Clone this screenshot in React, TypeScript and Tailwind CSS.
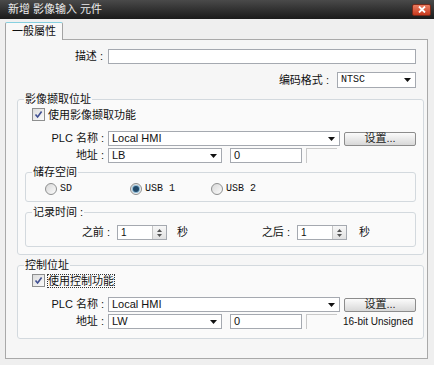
import React from "react";

const font = "font-['Liberation_Sans','Noto_Sans_CJK_SC',sans-serif]";
const mono = "font-['Liberation_Mono','Noto_Sans_CJK_SC',monospace]";

function Arrow() {
  return (
    <svg width="7" height="4" viewBox="0 0 7 4" className="shrink-0">
      <path d="M0 0h7L3.5 4z" fill="#111" />
    </svg>
  );
}

function Select({ value, className = "", monoText }: { value: string; className?: string; monoText?: boolean }) {
  return (
    <div className={`h-[15px] bg-white border border-[#a5a9b0] flex items-center pl-[3px] pr-[4px] ${className}`}>
      <span className={`flex-1 leading-none ${monoText ? mono + " text-[10px]" : ""}`}>{value}</span>
      <Arrow />
    </div>
  );
}

function TextBox({ value = "", className = "" }: { value?: string; className?: string }) {
  return (
    <div className={`h-[15px] bg-white border border-[#a5a9b0] flex items-center pl-[3px] leading-none ${className}`}>
      {value}
    </div>
  );
}

function Button() {
  return (
    <div className="w-[72px] h-[14px] rounded-[2px] border border-[#8c8c8c] bg-linear-to-b from-[#fbfbfb] to-[#d8d8d8] flex items-center justify-center leading-none text-[#222]">
      设置...
    </div>
  );
}

function Checkbox() {
  return (
    <div className="w-[13px] h-[13px] border border-[#8e8f8f] bg-linear-to-br from-[#dcdcdc] to-[#fbfbfb] flex items-center justify-center shrink-0">
      <svg width="9" height="9" viewBox="0 0 9 9">
        <path d="M1.5 4.5L3.6 7 7.6 1.5" fill="none" stroke="#3f4f92" strokeWidth="1.6" />
      </svg>
    </div>
  );
}

function Radio({ checked, label }: { checked?: boolean; label: string }) {
  return (
    <div className="flex items-center gap-[3px]">
      <div className="w-[12px] h-[12px] rounded-full border border-[#8e8f8f] bg-linear-to-br from-[#d8d8d8] to-[#fbfbfb] flex items-center justify-center">
        {checked && <div className="w-[6px] h-[6px] rounded-full bg-[#234a6a] ring-1 ring-[#8cbad6]" />}
      </div>
      <span className={`${mono} text-[10px] leading-none`}>{label}</span>
    </div>
  );
}

function Spinner() {
  return (
    <div className="w-[50px] h-[15px] bg-white border border-[#a5a9b0] flex">
      <span className="flex-1 pl-[3px] leading-[13px] text-[10px]">1</span>
      <div className="w-[14px] border-l border-[#c6c6c6] bg-linear-to-b from-[#f7f7f7] to-[#e2e2e2] flex flex-col items-center justify-center gap-[2px]">
        <svg width="5" height="3" viewBox="0 0 5 3">
          <path d="M0 3h5L2.5 0z" fill="#555" />
        </svg>
        <svg width="5" height="3" viewBox="0 0 5 3">
          <path d="M0 0h5L2.5 3z" fill="#555" />
        </svg>
      </div>
    </div>
  );
}

function Group({ title, className = "", children }: { title: string; className?: string; children: React.ReactNode }) {
  return (
    <fieldset className={`border border-[#d3d9de] rounded-[3px] bg-[#fafafa] ${className}`}>
      <legend className="ml-[6px] px-px leading-[13px]">{title}</legend>
      {children}
    </fieldset>
  );
}

function AddressBlock({ check, checkLabel, addr, focus, note }: { check?: boolean; checkLabel: string; addr: string; focus?: boolean; note?: string }) {
  return (
    <>
      <div className="mt-[2px] h-[13px] pl-[14px] flex items-center gap-[3px]">
        <Checkbox />
        <span className={`leading-[12px] ${focus ? "outline outline-1 outline-dotted outline-[#333]" : ""}`}>{checkLabel}</span>
      </div>
      <div className="mt-[10px] h-[15px] flex items-center">
        <span className="w-[90px] pr-[4px] text-right leading-none">PLC 名称 :</span>
        <Select value="Local HMI" className="w-[232px]" />
        <div className="ml-[4px]">
          <Button />
        </div>
      </div>
      <div className="mt-[2px] h-[15px] flex items-center">
        <span className="w-[90px] pr-[4px] text-right leading-none">地址 :</span>
        <Select value={addr} className="w-[114px]" />
        <TextBox value="0" className="ml-[8px] w-[72px]" />
        <div className="ml-[4px] w-[31px] h-[15px] border-l border-t border-[#c9c9c9]" />
        {note && <span className="ml-[6px] text-[10px] leading-none">{note}</span>}
      </div>
    </>
  );
}

export default function App() {
  return (
    <div className={`w-[434px] h-[365px] overflow-hidden bg-[#efefef] text-[11px] text-[#111] ${font} flex flex-col`}>
      {/* title bar */}
      <div className="h-[19px] shrink-0 bg-linear-to-b from-[#4a4a4a] to-[#1b1b1b] flex items-center justify-between pl-[8px] pr-[3px]">
        <span className="text-[#ececec] leading-none">新增 影像输入 元件</span>
        <div className="w-[19px] h-[12px] rounded-[2px] border border-[#7a2a1a] bg-linear-to-b from-[#ea7b5f] to-[#c8381c] flex items-center justify-center">
          <svg width="8" height="7" viewBox="0 0 8 7">
            <path d="M1 0.5l6 6M7 0.5l-6 6" stroke="#fff" strokeWidth="1.8" />
          </svg>
        </div>
      </div>

      {/* tab strip */}
      <div className="mt-[3px] ml-[5px] flex">
        <div className="h-[18px] w-[58px] -mb-px z-10 bg-[#f8f8f8] border border-[#a3a3a3] border-t-[#86d0e0] border-b-0 rounded-t-[2px] flex items-center pl-[6px] leading-none">
          一般屬性
        </div>
      </div>

      {/* panel */}
      <div className="ml-[5px] mr-[6px] h-[320px] border border-[#a9a9a9] bg-[#f6f6f6] flex flex-col">
        <div className="mt-[9px] h-[15px] flex items-center">
          <span className="w-[102px] pr-[5px] text-right leading-none">描述 :</span>
          <TextBox className="w-[308px]" />
        </div>
        <div className="mt-[8px] h-[16px] flex items-center justify-end pr-[11px]">
          <span className="leading-none mr-[8px]">编码格式 :</span>
          <Select value="NTSC" monoText className="w-[79px] h-[16px]" />
        </div>

        <Group title="影像撷取位址" className="mt-[5px] ml-[11px] mr-[3px] pb-[7px]">
          <AddressBlock checkLabel="使用影像撷取功能" addr="LB" />

          <Group title="储存空间" className="mt-[3px] mx-[7px] pb-[6px]">
            <div className="mt-[3px] h-[13px] pl-[19px] flex items-center">
              <div className="w-[85px]">
                <Radio label="SD" />
              </div>
              <div className="w-[81px]">
                <Radio label="USB 1" checked />
              </div>
              <Radio label="USB 2" />
            </div>
          </Group>

          <Group title="记录时间 :" className="mt-[4px] mx-[7px] pb-[6px]">
            <div className="mt-[6px] h-[15px] flex items-center">
              <span className="ml-[44px] w-[40px] text-right leading-none">之前 :</span>
              <div className="ml-[7px]">
                <Spinner />
              </div>
              <span className="ml-[10px] w-[11px] leading-none">秒</span>
              <span className="w-[102px] text-right leading-none">之后 :</span>
              <div className="ml-[7px]">
                <Spinner />
              </div>
              <span className="ml-[12px] leading-none">秒</span>
            </div>
          </Group>
        </Group>

        <Group title="控制位址" className="mt-[4px] ml-[11px] mr-[3px] pb-[9px]">
          <AddressBlock checkLabel="使用控制功能" addr="LW" focus note="16-bit Unsigned" />
        </Group>
      </div>
    </div>
  );
}
